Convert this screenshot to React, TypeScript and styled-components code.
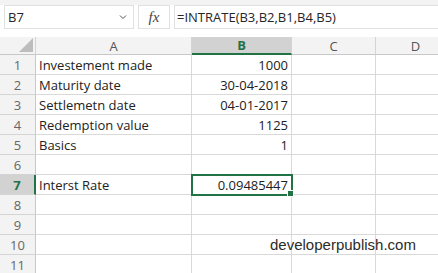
import React from 'react';
import styled, { createGlobalStyle } from 'styled-components';

const GlobalStyle = createGlobalStyle`
  html, body {
    margin: 0;
    padding: 0;
    background: #ffffff;
    overflow: hidden;
  }
  body {
    font-family: 'Open Sans', 'Noto Sans', sans-serif;
  }
`;

const Page = styled.div`
  width: 438px;
  height: 273px;
  overflow: hidden;
  position: relative;
  background: #ffffff;
`;

const TopStrip = styled.div`
  height: 5px;
  background: #f3f3f3;
`;

const FormulaBar = styled.div`
  display: flex;
  align-items: stretch;
  gap: 4px;
  height: 24px;
  padding: 0 0 0 4px;
  margin-bottom: 8px;
`;

const Box = styled.div`
  border: 1px solid #e1e1e1;
  background: #ffffff;
  display: flex;
  align-items: center;
  font-size: 13px;
  color: #262626;
`;

const NameBox = styled(Box)`
  width: 119px;
  padding: 0 6px 0 3px;
  justify-content: space-between;
`;

const FxBox = styled(Box)`
  width: 30px;
  justify-content: center;
  font-family: 'Liberation Serif', serif;
  font-style: italic;
  font-size: 15px;
  color: #444;
`;

const FormulaInput = styled(Box)`
  flex: 1;
  padding-left: 2px;
  border-right: none;
`;

const Sheet = styled.div`
  display: grid;
  grid-template-columns: 36px 156px 100px 84px 80px;
  grid-template-rows: 18px repeat(11, 20px);
  font-size: 13px;
  color: #222;
`;

const Corner = styled.div`
  background: #f3f3f3;
  border-right: 1px solid #d4d4d4;
  border-bottom: 1px solid #c8c8c8;
  position: relative;
  box-sizing: border-box;
`;

const Triangle = styled.div`
  position: absolute;
  right: 2px;
  bottom: 2px;
  width: 0;
  height: 0;
  border-left: 14px solid transparent;
  border-bottom: 14px solid #bdbdbd;
`;

const ColHead = styled.div<{ $active?: boolean }>`
  box-sizing: border-box;
  display: flex;
  align-items: center;
  justify-content: center;
  background: ${p => (p.$active ? '#d2d2d2' : '#f3f3f3')};
  border-right: 1px solid #d4d4d4;
  border-bottom: ${p => (p.$active ? '2px solid #217346' : '1px solid #c8c8c8')};
  color: ${p => (p.$active ? '#217346' : '#555')};
  font-weight: ${p => (p.$active ? 700 : 400)};
  font-size: 13px;
`;

const RowHead = styled.div<{ $active?: boolean }>`
  box-sizing: border-box;
  display: flex;
  align-items: center;
  justify-content: center;
  background: ${p => (p.$active ? '#d2d2d2' : '#f3f3f3')};
  border-right: ${p => (p.$active ? '2px solid #217346' : '1px solid #c8c8c8')};
  border-bottom: 1px solid #d4d4d4;
  color: ${p => (p.$active ? '#217346' : '#666')};
  font-weight: ${p => (p.$active ? 700 : 400)};
  font-size: 13px;
`;

const Cell = styled.div<{ $align?: 'left' | 'right'; $selected?: boolean }>`
  box-sizing: border-box;
  display: flex;
  align-items: center;
  justify-content: ${p => (p.$align === 'right' ? 'flex-end' : 'flex-start')};
  padding: 0 3px;
  border-right: 1px solid #d9d9d9;
  border-bottom: 1px solid #d9d9d9;
  white-space: nowrap;
  position: relative;
  ${p =>
    p.$selected &&
    `
    outline: 2px solid #217346;
    outline-offset: -1px;
    z-index: 2;
  `}
`;

const FillHandle = styled.div`
  position: absolute;
  right: -3px;
  bottom: -3px;
  width: 5px;
  height: 5px;
  background: #217346;
  border: 1px solid #ffffff;
`;

const Watermark = styled.div`
  position: absolute;
  left: 270px;
  top: 236px;
  font-family: 'Liberation Sans', Arial, sans-serif;
  font-size: 15px;
  color: #2b2b2b;
`;

const Chevron = () => (
  <svg width="8" height="6" viewBox="0 0 8 6">
    <path d="M1 1.5 L4 4.5 L7 1.5" fill="none" stroke="#555" strokeWidth="1" />
  </svg>
);

const rows: [string, string][] = [
  ['Investement made', '1000'],
  ['Maturity date', '30-04-2018'],
  ['Settlemetn date', '04-01-2017'],
  ['Redemption value', '1125'],
  ['Basics', '1'],
  ['', ''],
  ['Interst Rate', '0.09485447'],
  ['', ''],
  ['', ''],
  ['', ''],
  ['', ''],
];

const App: React.FC = () => {
  return (
    <Page>
      <GlobalStyle />
      <TopStrip />
      <FormulaBar>
        <NameBox>
          <span>B7</span>
          <Chevron />
        </NameBox>
        <FxBox>fx</FxBox>
        <FormulaInput>=INTRATE(B3,B2,B1,B4,B5)</FormulaInput>
      </FormulaBar>
      <Sheet>
        <Corner>
          <Triangle />
        </Corner>
        <ColHead>A</ColHead>
        <ColHead $active>B</ColHead>
        <ColHead>C</ColHead>
        <ColHead>D</ColHead>
        {rows.map(([label, value], i) => {
          const n = i + 1;
          const sel = n === 7;
          return (
            <React.Fragment key={n}>
              <RowHead $active={sel}>{n}</RowHead>
              <Cell>{label}</Cell>
              <Cell $align="right" $selected={sel}>
                {value}
                {sel && <FillHandle />}
              </Cell>
              <Cell />
              <Cell />
            </React.Fragment>
          );
        })}
      </Sheet>
      <Watermark>developerpublish.com</Watermark>
    </Page>
  );
};

export default App;
